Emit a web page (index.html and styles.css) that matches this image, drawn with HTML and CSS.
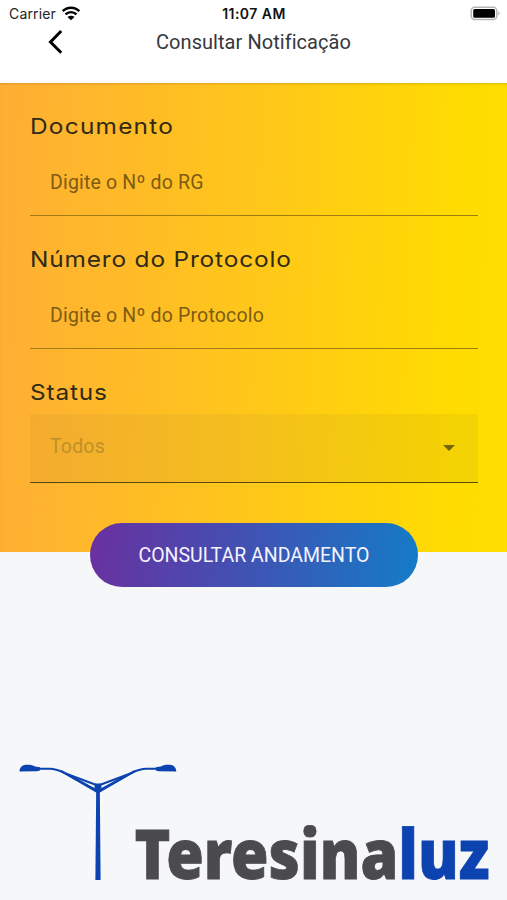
FILE: index.html
```html
<!DOCTYPE html>
<html lang="pt-BR">
<head>
<meta charset="utf-8">
<meta name="viewport" content="width=device-width, initial-scale=1">
<title>Consultar Notificação</title>
<link rel="stylesheet" href="styles.css">
</head>
<body>
<header class="top">
  <div class="status">
    <div class="carrier"><span>Carrier</span>
      <svg width="20" height="16" viewBox="0 0 20 16"><path d="M1.700 5.200C6.200.5 13.800.5 18.300 5.200M4.500 8.400c3-3.100 8-3.100 11 0" fill="none" stroke="#000" stroke-width="2.400"/><path d="M6.500 11c2-1.800 5-1.800 7 0L10 14.300z"/></svg>
    </div>
    <div class="time">11:07 AM</div>
    <svg class="battery" width="32" height="16" viewBox="0 0 32 16"><rect x="1.200" y="1.200" width="25.600" height="12.200" rx="3.500" fill="#fff" stroke="#b5b5b5" stroke-width="1.500"/><rect x="3.200" y="3" width="21.800" height="8.800" rx="1.500"/><path d="M28.300 5q2.600 2.300 0 4.600z" fill="#aaa"/></svg>
  </div>
  <div class="nav">
    <svg class="back" width="18" height="26" viewBox="0 0 18 26"><path d="M15.200 2 4.500 13l10.700 10.800" fill="none" stroke="#000" stroke-width="3"/></svg>
    <h1>Consultar Notificação</h1>
  </div>
</header>
<main class="form">
  <label class="field">
    <span class="label doc">Documento</span>
    <span class="input">Digite o Nº do RG</span>
  </label>
  <label class="field">
    <span class="label">Número do Protocolo</span>
    <span class="input">Digite o Nº do Protocolo</span>
  </label>
  <label class="field">
    <span class="label">Status</span>
    <span class="input select">Todos<i class="arrow"></i></span>
  </label>
  <button class="submit">CONSULTAR ANDAMENTO</button>
</main>
<footer class="brand">
  <svg width="507" height="150" viewBox="0 750 507 150">
    <g fill="#0d43b0">
      <path d="M19.500 771.500c.2-4 2.500-6.500 6.500-6.700 4-.2 7 .3 9 1.700l5 .8v3.200l-3 .8z"/>
      <path d="M176.300 771.500c-.2-4-2.500-6.500-6.500-6.700-4-.2-7 .3-9 1.700l-5 .8v3.200l3 .8z"/>
      <path d="M96.200 789h3.600l.8 91h-5.200z"/>
      <path d="M94.700 783.500h6.600l.3 7.500-3.600 2-3.600-2z"/>
      <path d="M57 769.500 75 777.500 97 789.500v3.500L72 778.500z"/>
      <path d="M139 769.500 121 777.500 99 789.500v3.500l25-14.500z"/>
    </g>
    <g fill="none" stroke="#0d43b0" stroke-linejoin="round">
      <path d="M38 768.800h12c7 0 11 2.700 17 5.200l30 11.300M158 768.800h-12c-7 0-11 2.700-17 5.200l-30 11.300" stroke-width="2"/>
      <path d="M61 771 97 790.800M135 771 99 790.800" stroke-width="2"/>
    </g>
    <text class="logo" x="134.500" y="879" textLength="355" lengthAdjust="spacingAndGlyphs"><tspan class="gray">Teresina</tspan><tspan class="blue">luz</tspan></text>
  </svg>
</footer>
</body>
</html>
```

FILE: styles.css
```css
* { box-sizing: border-box; }
body {
  margin: 0;
  height: 900px;
  display: flex;
  flex-direction: column;
  background: #f5f7f9;
  font-family: Roboto, "Liberation Sans", sans-serif;
  overflow: hidden;
}
.top { height: 83px; background: #fff; }
.status {
  height: 27px;
  display: grid;
  grid-template-columns: 1fr auto 1fr;
  align-items: center;
  padding: 0 5px 0 9px;
  font-family: Inter, sans-serif;
  font-size: 14px;
  color: #222;
}
.carrier { display: flex; align-items: center; gap: 5px; letter-spacing: 0.15px; }
.time { font-weight: 600; color: #111; letter-spacing: 0.45px; margin-right: 3px; }
.battery { justify-self: end; }
.nav {
  height: 30px;
  display: grid;
  grid-template-columns: 108px 1fr 108px;
  align-items: center;
}
.back { margin-left: 46px; }
h1 {
  margin: 0;
  text-align: center;
  font-weight: 400;
  font-size: 20px;
  letter-spacing: 0.05px;
  color: #35383c;
  white-space: nowrap;
}
.form {
  height: 469px;
  flex: none;
  padding: 28px 29px 0 30px;
  background: linear-gradient(92deg, #ffae35 0%, #ffc71a 50%, #ffdc00 90%, #ffde00 100%);
  box-shadow: inset 0 2px 2px -1px rgba(90, 70, 30, 0.25);
}
.field { display: block; height: 133px; }
.label {
  display: block;
  height: 30px;
  line-height: 31px;
  font-family: Inter, sans-serif;
  font-size: 22px;
  letter-spacing: 0.75px;
  color: #302b16;
  white-space: nowrap;
  transform: scaleX(1.11);
  transform-origin: left;
}
.doc { letter-spacing: 1.1px; }
.input {
  display: block;
  height: 75px;
  padding: 0 20px;
  line-height: 83px;
  font-size: 19.5px;
  color: #7c5c14;
  border-bottom: 1.5px solid #a17c15;
  letter-spacing: 0.18px;
}
.select {
  display: flex;
  justify-content: space-between;
  align-items: center;
  height: 69px;
  margin-top: 7px;
  padding: 0 23px 3px 20px;
  line-height: 62px;
  color: #bd9127;
  background: rgba(90, 90, 60, 0.065);
  border-bottom-color: #594815;
}
.arrow {
  border: 6px solid transparent;
  border-top-color: #756507;
  border-bottom: 0;
  margin-top: 3px;
}
.submit {
  display: block;
  width: 328px;
  height: 64px;
  margin: 13px 0 0 60px;
  padding: 0;
  border: 0;
  border-radius: 32px;
  background: linear-gradient(98deg, #6a309f, #4350b2 45%, #147cc7);
  color: #f4f3ff;
  font-family: Roboto, sans-serif;
  font-size: 19.5px;
}
.brand { margin-top: auto; height: 150px; }
.brand svg { display: block; }
.logo {
  font-family: "Noto Sans", "Open Sans", sans-serif;
  font-weight: 900;
  font-size: 69px;
  stroke-width: 0.8px;
}
.gray { fill: #4b4b4d; stroke: #4b4b4d; }
.blue { fill: #0d43b0; stroke: #0d43b0; }
```
